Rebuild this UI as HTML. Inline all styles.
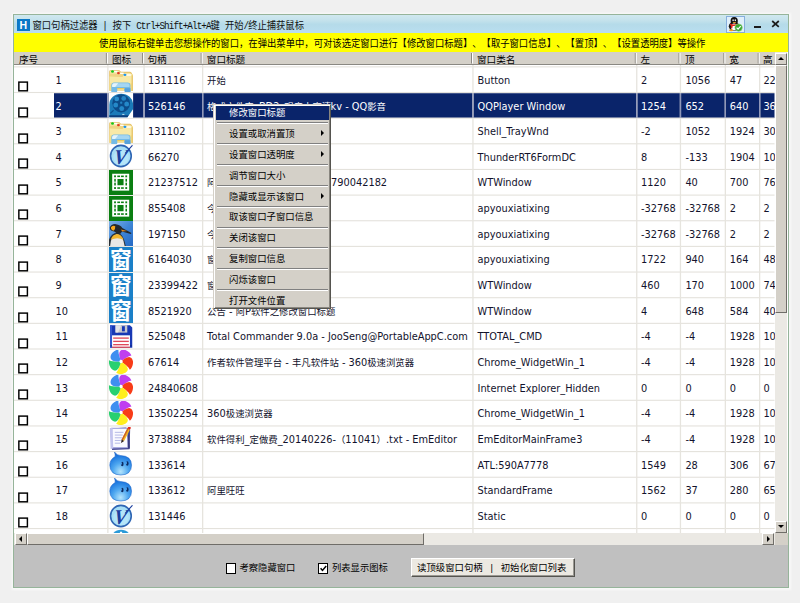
<!DOCTYPE html>
<html lang="zh-CN"><head><meta charset="utf-8"><title>窗口句柄过滤器</title>
<style>
html,body{margin:0;padding:0}
body{width:800px;height:603px;overflow:hidden;background:#f0f0f0;position:relative;
 font-family:"DejaVu Sans","Liberation Sans","Noto Sans CJK SC",sans-serif;font-size:9.8px;color:#000;text-spacing-trim:space-all}
.a{position:absolute;white-space:nowrap}
.cj{font-family:"Liberation Sans","Noto Sans CJK SC",sans-serif;font-size:9.4px}
.t{position:absolute;white-space:nowrap;height:14px;line-height:14px;font-size:9.8px;color:#12122c}
.t.s{color:#fff}
.c{font-size:9.4px}
.hd{position:absolute;white-space:nowrap;top:52.7px;height:13px;line-height:14px;font-size:9.6px;font-family:"Liberation Sans","Noto Sans CJK SC",sans-serif}
.cb{position:absolute;box-sizing:border-box;border:1.5px solid #000;background:#fff}
.mi{position:absolute;left:15px;white-space:nowrap;height:14px;line-height:14px;font-size:9.4px;font-family:"Liberation Sans","Noto Sans CJK SC",sans-serif;color:#000}
.sep{position:absolute;left:3px;right:2px;height:1px;background:#808080;border-bottom:1px solid #fff}
.arr{position:absolute;width:0;height:0;border-left:3px solid #000;border-top:3px solid transparent;border-bottom:3px solid transparent}
</style></head><body>

<div class="a" style="left:13px;top:14px;width:776px;height:574px;box-shadow:0 0 2px 1.5px rgba(255,255,255,.6);background:transparent"></div>
<div class="a" style="left:13px;top:14px;width:776px;height:574px;background:#96b49a"></div>
<div class="a" style="left:14px;top:15px;width:774px;height:572px;background:#fff"></div>
<div class="a" style="left:14px;top:15px;width:774px;height:18px;background:linear-gradient(#d0e8ef 0%,#c4e2ec 30%,#b5dbe9 52%,#b9def0 100%)"></div>
<div class="a" style="left:17px;top:18.5px;width:12.6px;height:12.4px;background:#0b78c6"></div>
<div class="a" style="left:17px;top:18.5px;width:12.6px;height:12.4px;line-height:12.6px;text-align:center;color:#fff;font-family:'Liberation Sans',sans-serif;font-weight:bold;font-size:10.5px">H</div>
<div class="a" style="left:32.5px;top:20.4px;height:14px;line-height:14px;font-size:9.3px;transform:scaleY(1.13);transform-origin:50% 50%;font-family:'Liberation Mono','Noto Sans CJK SC',monospace;color:#111">窗口句柄过滤器<span style="display:inline-block;width:15px;text-align:center">|</span>按下<span style="letter-spacing:-0.93px;margin-left:5px">Ctrl+Shift+Alt+A</span>键<span style="display:inline-block;width:5px"></span>开始<span style="letter-spacing:-0.93px">/</span>终止捕获鼠标</div>
<div class="a" style="left:726.4px;top:15.6px;width:18.2px;height:17px;box-sizing:border-box;background:#dfeffa;border:1px solid #86aedc"></div>
<svg class="a" style="left:727px;top:16px" width="17" height="16" viewBox="0 0 17 16">
<ellipse cx="7" cy="10.3" rx="5.2" ry="4.6" fill="#1a1a1a"/>
<ellipse cx="7.2" cy="5" rx="3.6" ry="3.9" fill="#111"/>
<ellipse cx="7" cy="11" rx="3" ry="3.6" fill="#fff"/>
<path d="M3.2 7.6 Q7 9.6 10.8 7.4 L11 9 Q7 11 3 9.2 Z" fill="#e0281c"/>
<path d="M4.2 9 L5.8 9.6 L5.2 12.6 L3.8 12 Z" fill="#e0281c"/>
<ellipse cx="4.2" cy="14.3" rx="2.2" ry="1" fill="#f0a020"/>
<ellipse cx="7.4" cy="6.6" rx="1.7" ry=".7" fill="#f0a020"/>
<ellipse cx="6.1" cy="4.3" rx=".7" ry="1" fill="#fff"/><ellipse cx="8.3" cy="4.3" rx=".7" ry="1" fill="#fff"/>
<circle cx="11.6" cy="11.6" r="3.7" fill="#3aa832"/><circle cx="11.6" cy="11.6" r="3.7" fill="none" stroke="#8ad080" stroke-width=".6"/>
<path d="M9.6 11.6 L11.1 13.1 L13.7 10.1" fill="none" stroke="#fff" stroke-width="1.2"/>
</svg>
<div class="a" style="left:753.7px;top:26px;width:7.4px;height:1.8px;background:#1c1c1c"></div>
<svg class="a" style="left:771px;top:20px" width="9" height="8" viewBox="0 0 9 8"><path d="M1.2 1 L7.8 6.9 M7.8 1 L1.2 6.9" stroke="#1c1c1c" stroke-width="1.7" fill="none"/></svg>
<div class="a" style="left:14px;top:33px;width:774px;height:19px;background:#ffff00"></div>
<div class="a" style="left:99.1px;top:37.4px;height:14px;line-height:14px;font-size:9.335px;transform:scaleY(1.07);transform-origin:50% 50%;font-family:'Liberation Sans','Noto Sans CJK SC',sans-serif;color:#000">使用鼠标右键单击您想操作的窗口，在弹出菜单中，可对该选定窗口进行【修改窗口标题】、【取子窗口信息】、【置顶】、【设置透明度】等操作</div>
<div class="a" style="left:14px;top:52px;width:760.5px;height:12.2px;background:#d4d0c8;border-bottom:1px solid #8a8882"></div>
<div class="hd" style="left:19px">序号</div>
<div class="hd" style="left:112px">图标</div>
<div class="hd" style="left:147.5px">句柄</div>
<div class="hd" style="left:206.8px">窗口标题</div>
<div class="hd" style="left:477px">窗口类名</div>
<div class="hd" style="left:640.6px">左</div>
<div class="hd" style="left:685px">顶</div>
<div class="hd" style="left:729.2px">宽</div>
<div class="hd" style="left:763px">高</div>
<svg class="a" style="left:0;top:0" width="800" height="603" viewBox="0 0 800 603"><rect x="105.9" y="53" width="1" height="10.5" fill="#8a8780"/><rect x="106.9" y="53" width="1" height="10.5" fill="#fff"/><rect x="142.1" y="53" width="1" height="10.5" fill="#8a8780"/><rect x="143.1" y="53" width="1" height="10.5" fill="#fff"/><rect x="200.7" y="53" width="1" height="10.5" fill="#8a8780"/><rect x="201.7" y="53" width="1" height="10.5" fill="#fff"/><rect x="471" y="53" width="1" height="10.5" fill="#8a8780"/><rect x="472" y="53" width="1" height="10.5" fill="#fff"/><rect x="634.8" y="53" width="1" height="10.5" fill="#8a8780"/><rect x="635.8" y="53" width="1" height="10.5" fill="#fff"/><rect x="678.5" y="53" width="1" height="10.5" fill="#8a8780"/><rect x="679.5" y="53" width="1" height="10.5" fill="#fff"/><rect x="723.4" y="53" width="1" height="10.5" fill="#8a8780"/><rect x="724.4" y="53" width="1" height="10.5" fill="#fff"/><rect x="757.7" y="53" width="1" height="10.5" fill="#8a8780"/><rect x="758.7" y="53" width="1" height="10.5" fill="#fff"/><rect x="54" y="93.2" width="720.5" height="24.65" fill="#0a246a"/><rect x="108.7" y="93.2" width="24.4" height="24.65" fill="#fff"/><rect x="14" y="66.3" width="760.5" height="1.1" fill="#e4e2dc"/><rect x="14" y="91.95" width="760.5" height="1.1" fill="#e4e2dc"/><rect x="14" y="117.6" width="760.5" height="1.1" fill="#e4e2dc"/><rect x="14" y="143.25" width="760.5" height="1.1" fill="#e4e2dc"/><rect x="14" y="168.9" width="760.5" height="1.1" fill="#e4e2dc"/><rect x="14" y="194.55" width="760.5" height="1.1" fill="#e4e2dc"/><rect x="14" y="220.2" width="760.5" height="1.1" fill="#e4e2dc"/><rect x="14" y="245.85" width="760.5" height="1.1" fill="#e4e2dc"/><rect x="14" y="271.5" width="760.5" height="1.1" fill="#e4e2dc"/><rect x="14" y="297.15" width="760.5" height="1.1" fill="#e4e2dc"/><rect x="14" y="322.8" width="760.5" height="1.1" fill="#e4e2dc"/><rect x="14" y="348.45" width="760.5" height="1.1" fill="#e4e2dc"/><rect x="14" y="374.1" width="760.5" height="1.1" fill="#e4e2dc"/><rect x="14" y="399.75" width="760.5" height="1.1" fill="#e4e2dc"/><rect x="14" y="425.4" width="760.5" height="1.1" fill="#e4e2dc"/><rect x="14" y="451.05" width="760.5" height="1.1" fill="#e4e2dc"/><rect x="14" y="476.7" width="760.5" height="1.1" fill="#e4e2dc"/><rect x="14" y="502.35" width="760.5" height="1.1" fill="#e4e2dc"/><rect x="14" y="528" width="760.5" height="1.1" fill="#e4e2dc"/><rect x="107.2" y="65" width="1.3" height="468" fill="#e6e4de"/><rect x="107.2" y="93.2" width="1.3" height="24.65" fill="#9097b8"/><rect x="143.4" y="65" width="1.3" height="468" fill="#e6e4de"/><rect x="143.4" y="93.2" width="1.3" height="24.65" fill="#9097b8"/><rect x="202" y="65" width="1.3" height="468" fill="#e6e4de"/><rect x="202" y="93.2" width="1.3" height="24.65" fill="#9097b8"/><rect x="472.3" y="65" width="1.3" height="468" fill="#e6e4de"/><rect x="472.3" y="93.2" width="1.3" height="24.65" fill="#9097b8"/><rect x="636.1" y="65" width="1.3" height="468" fill="#e6e4de"/><rect x="636.1" y="93.2" width="1.3" height="24.65" fill="#9097b8"/><rect x="679.8" y="65" width="1.3" height="468" fill="#e6e4de"/><rect x="679.8" y="93.2" width="1.3" height="24.65" fill="#9097b8"/><rect x="724.7" y="65" width="1.3" height="468" fill="#e6e4de"/><rect x="724.7" y="93.2" width="1.3" height="24.65" fill="#9097b8"/><rect x="759" y="65" width="1.3" height="468" fill="#e6e4de"/><rect x="759" y="93.2" width="1.3" height="24.65" fill="#9097b8"/></svg>
<svg class="a" style="left:17px;top:80.2px" width="13" height="13" viewBox="0 0 13 13"><rect x="1.85" y="2.1" width="8.55" height="8.7" fill="#fff" stroke="#000" stroke-width="1.45"/></svg>
<div class="t" style="left:55.5px;top:73.875px">1</div>
<div class="t" style="left:148px;top:73.875px">131116</div>
<div class="t" style="left:207.1px;top:73.875px"><span class="c">开始</span></div>
<div class="t" style="left:477.5px;top:73.875px">Button</div>
<div class="t" style="left:641px;top:73.875px">2</div>
<div class="t" style="left:685.4px;top:73.875px">1056</div>
<div class="t" style="left:729.8px;top:73.875px">47</div>
<div class="t" style="left:763.4px;top:73.875px">22</div>
<svg class="a" style="left:17px;top:105.85px" width="13" height="13" viewBox="0 0 13 13"><rect x="1.85" y="2.1" width="8.55" height="8.7" fill="#fff" stroke="#000" stroke-width="1.45"/></svg>
<div class="t s" style="left:55.5px;top:99.525px">2</div>
<div class="t s" style="left:148px;top:99.525px">526146</div>
<div class="t s" style="left:207.1px;top:99.525px"><span class="c">格式文件夹</span>_BD2_<span class="c">观音山高清</span></div>
<div class="t s" style="left:477.5px;top:99.525px">QQPlayer Window</div>
<div class="t s" style="left:641px;top:99.525px">1254</div>
<div class="t s" style="left:685.4px;top:99.525px">652</div>
<div class="t s" style="left:729.8px;top:99.525px">640</div>
<div class="t s" style="left:763.4px;top:99.525px">36</div>
<svg class="a" style="left:17px;top:131.5px" width="13" height="13" viewBox="0 0 13 13"><rect x="1.85" y="2.1" width="8.55" height="8.7" fill="#fff" stroke="#000" stroke-width="1.45"/></svg>
<div class="t" style="left:55.5px;top:125.175px">3</div>
<div class="t" style="left:148px;top:125.175px">131102</div>
<div class="t" style="left:477.5px;top:125.175px">Shell_TrayWnd</div>
<div class="t" style="left:641px;top:125.175px">-2</div>
<div class="t" style="left:685.4px;top:125.175px">1052</div>
<div class="t" style="left:729.8px;top:125.175px">1924</div>
<div class="t" style="left:763.4px;top:125.175px">30</div>
<svg class="a" style="left:17px;top:157.15px" width="13" height="13" viewBox="0 0 13 13"><rect x="1.85" y="2.1" width="8.55" height="8.7" fill="#fff" stroke="#000" stroke-width="1.45"/></svg>
<div class="t" style="left:55.5px;top:150.825px">4</div>
<div class="t" style="left:148px;top:150.825px">66270</div>
<div class="t" style="left:477.5px;top:150.825px">ThunderRT6FormDC</div>
<div class="t" style="left:641px;top:150.825px">8</div>
<div class="t" style="left:685.4px;top:150.825px">-133</div>
<div class="t" style="left:729.8px;top:150.825px">1904</div>
<div class="t" style="left:763.4px;top:150.825px">10</div>
<svg class="a" style="left:17px;top:182.8px" width="13" height="13" viewBox="0 0 13 13"><rect x="1.85" y="2.1" width="8.55" height="8.7" fill="#fff" stroke="#000" stroke-width="1.45"/></svg>
<div class="t" style="left:55.5px;top:176.475px">5</div>
<div class="t" style="left:148px;top:176.475px">21237512</div>
<div class="t" style="left:207.1px;top:176.475px"><span class="c">阿</span>P<span class="c">软件之窗口句柄过滤器</span></div>
<div class="t" style="left:477.5px;top:176.475px">WTWindow</div>
<div class="t" style="left:641px;top:176.475px">1120</div>
<div class="t" style="left:685.4px;top:176.475px">40</div>
<div class="t" style="left:729.8px;top:176.475px">700</div>
<div class="t" style="left:763.4px;top:176.475px">76</div>
<svg class="a" style="left:17px;top:208.45px" width="13" height="13" viewBox="0 0 13 13"><rect x="1.85" y="2.1" width="8.55" height="8.7" fill="#fff" stroke="#000" stroke-width="1.45"/></svg>
<div class="t" style="left:55.5px;top:202.125px">6</div>
<div class="t" style="left:148px;top:202.125px">855408</div>
<div class="t" style="left:207.1px;top:202.125px"><span class="c">今日要闻</span></div>
<div class="t" style="left:477.5px;top:202.125px">apyouxiatixing</div>
<div class="t" style="left:641px;top:202.125px">-32768</div>
<div class="t" style="left:685.4px;top:202.125px">-32768</div>
<div class="t" style="left:729.8px;top:202.125px">2</div>
<div class="t" style="left:763.4px;top:202.125px">2</div>
<svg class="a" style="left:17px;top:234.1px" width="13" height="13" viewBox="0 0 13 13"><rect x="1.85" y="2.1" width="8.55" height="8.7" fill="#fff" stroke="#000" stroke-width="1.45"/></svg>
<div class="t" style="left:55.5px;top:227.775px">7</div>
<div class="t" style="left:148px;top:227.775px">197150</div>
<div class="t" style="left:207.1px;top:227.775px"><span class="c">今日要闻</span></div>
<div class="t" style="left:477.5px;top:227.775px">apyouxiatixing</div>
<div class="t" style="left:641px;top:227.775px">-32768</div>
<div class="t" style="left:685.4px;top:227.775px">-32768</div>
<div class="t" style="left:729.8px;top:227.775px">2</div>
<div class="t" style="left:763.4px;top:227.775px">2</div>
<svg class="a" style="left:17px;top:259.75px" width="13" height="13" viewBox="0 0 13 13"><rect x="1.85" y="2.1" width="8.55" height="8.7" fill="#fff" stroke="#000" stroke-width="1.45"/></svg>
<div class="t" style="left:55.5px;top:253.425px">8</div>
<div class="t" style="left:148px;top:253.425px">6164030</div>
<div class="t" style="left:207.1px;top:253.425px"><span class="c">窗口句柄过滤器</span></div>
<div class="t" style="left:477.5px;top:253.425px">apyouxiatixing</div>
<div class="t" style="left:641px;top:253.425px">1722</div>
<div class="t" style="left:685.4px;top:253.425px">940</div>
<div class="t" style="left:729.8px;top:253.425px">164</div>
<div class="t" style="left:763.4px;top:253.425px">48</div>
<svg class="a" style="left:17px;top:285.4px" width="13" height="13" viewBox="0 0 13 13"><rect x="1.85" y="2.1" width="8.55" height="8.7" fill="#fff" stroke="#000" stroke-width="1.45"/></svg>
<div class="t" style="left:55.5px;top:279.075px">9</div>
<div class="t" style="left:148px;top:279.075px">23399422</div>
<div class="t" style="left:207.1px;top:279.075px"><span class="c">窗口句柄过滤器</span></div>
<div class="t" style="left:477.5px;top:279.075px">WTWindow</div>
<div class="t" style="left:641px;top:279.075px">460</div>
<div class="t" style="left:685.4px;top:279.075px">170</div>
<div class="t" style="left:729.8px;top:279.075px">1000</div>
<div class="t" style="left:763.4px;top:279.075px">74</div>
<svg class="a" style="left:17px;top:311.05px" width="13" height="13" viewBox="0 0 13 13"><rect x="1.85" y="2.1" width="8.55" height="8.7" fill="#fff" stroke="#000" stroke-width="1.45"/></svg>
<div class="t" style="left:55.5px;top:304.725px">10</div>
<div class="t" style="left:148px;top:304.725px">8521920</div>
<div class="t" style="left:207.1px;top:304.725px"><span class="c">公告</span> - <span class="c">阿</span>P<span class="c">软件之修改窗口标题</span></div>
<div class="t" style="left:477.5px;top:304.725px">WTWindow</div>
<div class="t" style="left:641px;top:304.725px">4</div>
<div class="t" style="left:685.4px;top:304.725px">648</div>
<div class="t" style="left:729.8px;top:304.725px">584</div>
<div class="t" style="left:763.4px;top:304.725px">40</div>
<svg class="a" style="left:17px;top:336.7px" width="13" height="13" viewBox="0 0 13 13"><rect x="1.85" y="2.1" width="8.55" height="8.7" fill="#fff" stroke="#000" stroke-width="1.45"/></svg>
<div class="t" style="left:55.5px;top:330.375px">11</div>
<div class="t" style="left:148px;top:330.375px">525048</div>
<div class="t" style="left:207.1px;top:330.375px">Total Commander 9.0a - JooSeng@PortableAppC.com</div>
<div class="t" style="left:477.5px;top:330.375px">TTOTAL_CMD</div>
<div class="t" style="left:641px;top:330.375px">-4</div>
<div class="t" style="left:685.4px;top:330.375px">-4</div>
<div class="t" style="left:729.8px;top:330.375px">1928</div>
<div class="t" style="left:763.4px;top:330.375px">10</div>
<svg class="a" style="left:17px;top:362.35px" width="13" height="13" viewBox="0 0 13 13"><rect x="1.85" y="2.1" width="8.55" height="8.7" fill="#fff" stroke="#000" stroke-width="1.45"/></svg>
<div class="t" style="left:55.5px;top:356.025px">12</div>
<div class="t" style="left:148px;top:356.025px">67614</div>
<div class="t" style="left:207.1px;top:356.025px"><span class="c">作者软件管理平台</span> - <span class="c">丰凡软件站</span> - 360<span class="c">极速浏览器</span></div>
<div class="t" style="left:477.5px;top:356.025px">Chrome_WidgetWin_1</div>
<div class="t" style="left:641px;top:356.025px">-4</div>
<div class="t" style="left:685.4px;top:356.025px">-4</div>
<div class="t" style="left:729.8px;top:356.025px">1928</div>
<div class="t" style="left:763.4px;top:356.025px">10</div>
<svg class="a" style="left:17px;top:388px" width="13" height="13" viewBox="0 0 13 13"><rect x="1.85" y="2.1" width="8.55" height="8.7" fill="#fff" stroke="#000" stroke-width="1.45"/></svg>
<div class="t" style="left:55.5px;top:381.675px">13</div>
<div class="t" style="left:148px;top:381.675px">24840608</div>
<div class="t" style="left:477.5px;top:381.675px">Internet Explorer_Hidden</div>
<div class="t" style="left:641px;top:381.675px">0</div>
<div class="t" style="left:685.4px;top:381.675px">0</div>
<div class="t" style="left:729.8px;top:381.675px">0</div>
<div class="t" style="left:763.4px;top:381.675px">0</div>
<svg class="a" style="left:17px;top:413.65px" width="13" height="13" viewBox="0 0 13 13"><rect x="1.85" y="2.1" width="8.55" height="8.7" fill="#fff" stroke="#000" stroke-width="1.45"/></svg>
<div class="t" style="left:55.5px;top:407.325px">14</div>
<div class="t" style="left:148px;top:407.325px">13502254</div>
<div class="t" style="left:207.1px;top:407.325px">360<span class="c">极速浏览器</span></div>
<div class="t" style="left:477.5px;top:407.325px">Chrome_WidgetWin_1</div>
<div class="t" style="left:641px;top:407.325px">-4</div>
<div class="t" style="left:685.4px;top:407.325px">-4</div>
<div class="t" style="left:729.8px;top:407.325px">1928</div>
<div class="t" style="left:763.4px;top:407.325px">10</div>
<svg class="a" style="left:17px;top:439.3px" width="13" height="13" viewBox="0 0 13 13"><rect x="1.85" y="2.1" width="8.55" height="8.7" fill="#fff" stroke="#000" stroke-width="1.45"/></svg>
<div class="t" style="left:55.5px;top:432.975px">15</div>
<div class="t" style="left:148px;top:432.975px">3738884</div>
<div class="t" style="left:207.1px;top:432.975px"><span class="c">软件得利</span>_<span class="c">定做费</span>_20140226-<span class="c">（</span>11041<span class="c">）</span>.txt - EmEditor</div>
<div class="t" style="left:477.5px;top:432.975px">EmEditorMainFrame3</div>
<div class="t" style="left:641px;top:432.975px">-4</div>
<div class="t" style="left:685.4px;top:432.975px">-4</div>
<div class="t" style="left:729.8px;top:432.975px">1928</div>
<div class="t" style="left:763.4px;top:432.975px">10</div>
<svg class="a" style="left:17px;top:464.95px" width="13" height="13" viewBox="0 0 13 13"><rect x="1.85" y="2.1" width="8.55" height="8.7" fill="#fff" stroke="#000" stroke-width="1.45"/></svg>
<div class="t" style="left:55.5px;top:458.625px">16</div>
<div class="t" style="left:148px;top:458.625px">133614</div>
<div class="t" style="left:477.5px;top:458.625px">ATL:590A7778</div>
<div class="t" style="left:641px;top:458.625px">1549</div>
<div class="t" style="left:685.4px;top:458.625px">28</div>
<div class="t" style="left:729.8px;top:458.625px">306</div>
<div class="t" style="left:763.4px;top:458.625px">67</div>
<svg class="a" style="left:17px;top:490.6px" width="13" height="13" viewBox="0 0 13 13"><rect x="1.85" y="2.1" width="8.55" height="8.7" fill="#fff" stroke="#000" stroke-width="1.45"/></svg>
<div class="t" style="left:55.5px;top:484.275px">17</div>
<div class="t" style="left:148px;top:484.275px">133612</div>
<div class="t" style="left:207.1px;top:484.275px"><span class="c">阿里旺旺</span></div>
<div class="t" style="left:477.5px;top:484.275px">StandardFrame</div>
<div class="t" style="left:641px;top:484.275px">1562</div>
<div class="t" style="left:685.4px;top:484.275px">37</div>
<div class="t" style="left:729.8px;top:484.275px">280</div>
<div class="t" style="left:763.4px;top:484.275px">65</div>
<svg class="a" style="left:17px;top:516.25px" width="13" height="13" viewBox="0 0 13 13"><rect x="1.85" y="2.1" width="8.55" height="8.7" fill="#fff" stroke="#000" stroke-width="1.45"/></svg>
<div class="t" style="left:55.5px;top:509.925px">18</div>
<div class="t" style="left:148px;top:509.925px">131446</div>
<div class="t" style="left:477.5px;top:509.925px">Static</div>
<div class="t" style="left:641px;top:509.925px">0</div>
<div class="t" style="left:685.4px;top:509.925px">0</div>
<div class="t" style="left:729.8px;top:509.925px">0</div>
<div class="t" style="left:763.4px;top:509.925px">0</div>
<div class="t s" style="left:317.9px;top:99.525px">.mkv - QQ<span class="c">影音</span></div>
<div class="t" style="left:331px;top:176.475px">790042182</div>
<svg class="a" style="left:108.7px;top:67.45px" width="24.4" height="25" viewBox="0 0 32 32" preserveAspectRatio="none">
<g transform="translate(0,0.9)"><path d="M0.3 29.6 L0.3 5 Q0.3 3.3 2 3.3 L13.6 3.3 L15.6 5.2 L27.6 5.2 Q29.7 5.2 29.7 7.2 L31.7 9.6 L31.7 29.6 Z" fill="#e4bc5c"/>
<path d="M1.2 4.3 L13.2 4.3 L15.2 6.3 L28.6 6.3 L28.6 9 L1.2 9 Z" fill="#f6e3a0"/>
<path d="M1.2 7.6 L20.6 7.6 L22.4 10 L1.2 12 Z" fill="#efd485"/>
<path d="M0.8 11.2 L18 11.2 L19.4 8.2 L30.9 8.2 L30.9 29 L0.8 29 Z" fill="#f8e9a6"/>
<path d="M0.8 20 L30.9 20 L30.9 29 L0.8 29 Z" fill="#f5de8a"/>
<rect x="29.6" y="10" width="1.6" height="19.4" fill="#e7c56a"/>
<rect x="6.9" y="4.1" width="4.2" height="1.7" fill="#fff"/>
<rect x="14.7" y="6.3" width="4.4" height="1.7" fill="#fff"/>
<rect x="22.9" y="8.5" width="5.8" height="1.7" fill="#fff"/>
<ellipse cx="4.6" cy="4.9" rx="1.9" ry="1.5" fill="#12c81a"/>
<ellipse cx="12.4" cy="6.9" rx="1.9" ry="1.5" fill="#e23a22"/>
<ellipse cx="20.9" cy="9.1" rx="1.9" ry="1.5" fill="#1a94f2"/>
<path d="M3 32 L3 22 Q3 18.8 6.2 18.8 L24.9 18.8 Q28.1 18.8 28.1 22 L28.1 32 L20.3 32 L20.3 26.2 L10.9 26.2 L10.9 32 Z" fill="#74bbe6"/>
<path d="M4.2 22.4 Q4.2 20 6.6 20 L24.5 20 Q26.9 20 26.9 22.4 L26.9 24.6 L4.2 24.6 Z" fill="#a4d6f2"/>
<path d="M4.2 22.4 Q4.2 20 6.6 20 L12 20 L8 24.6 L4.2 24.6 Z" fill="#e4f4fc"/>
<path d="M20.3 26.2 L28.1 26.2 L28.1 32 L20.3 32 Z" fill="#58a2da"/>
<rect x="10.9" y="29.6" width="9.4" height="2.4" fill="#fff"/>
<rect x="10.9" y="26.2" width="9.4" height="1" fill="#f2c84e"/></g>
</svg>
<svg class="a" style="left:108.7px;top:93.1px" width="24.4" height="25" viewBox="0 0 32 32" preserveAspectRatio="none">
<rect x="0" y="0" width="32" height="32" fill="#fff"/>
<path d="M0.4 15 A15.6 14.2 0 0 1 31.6 15 L31.6 20.5 L24.2 31 L0.4 31 Z" fill="#1b7bb9"/>
<path d="M0.4 28.6 L25.8 28.6 L24.2 31 L0.4 31 Z" fill="#0d3f7e"/>
<path d="M1.2 25.5 L5.5 21.5 L6.6 22.6 L2.2 26.6 Z" fill="#0d4f8c"/>
<circle cx="16" cy="13.2" r="11.6" fill="#0c4c8a"/>
<circle cx="10.1" cy="7.6" r="3.1" fill="#2b8fce"/>
<circle cx="19.3" cy="6.9" r="3.1" fill="#2384c4"/>
<circle cx="8.8" cy="15.2" r="3.2" fill="#2489c9"/>
<circle cx="23.2" cy="14" r="3.2" fill="#2489c9"/>
<circle cx="16.7" cy="19.7" r="3.2" fill="#2489c9"/>
<circle cx="16" cy="12.4" r="1.5" fill="#2384c4"/>
<rect x="17.4" y="26.8" width="2.8" height="1.1" fill="#d8ecf8"/>
</svg>
<svg class="a" style="left:108.7px;top:118.75px" width="24.4" height="25" viewBox="0 0 32 32" preserveAspectRatio="none">
<g transform="translate(0,0.9)"><path d="M0.3 29.6 L0.3 5 Q0.3 3.3 2 3.3 L13.6 3.3 L15.6 5.2 L27.6 5.2 Q29.7 5.2 29.7 7.2 L31.7 9.6 L31.7 29.6 Z" fill="#e4bc5c"/>
<path d="M1.2 4.3 L13.2 4.3 L15.2 6.3 L28.6 6.3 L28.6 9 L1.2 9 Z" fill="#f6e3a0"/>
<path d="M1.2 7.6 L20.6 7.6 L22.4 10 L1.2 12 Z" fill="#efd485"/>
<path d="M0.8 11.2 L18 11.2 L19.4 8.2 L30.9 8.2 L30.9 29 L0.8 29 Z" fill="#f8e9a6"/>
<path d="M0.8 20 L30.9 20 L30.9 29 L0.8 29 Z" fill="#f5de8a"/>
<rect x="29.6" y="10" width="1.6" height="19.4" fill="#e7c56a"/>
<rect x="6.9" y="4.1" width="4.2" height="1.7" fill="#fff"/>
<rect x="14.7" y="6.3" width="4.4" height="1.7" fill="#fff"/>
<rect x="22.9" y="8.5" width="5.8" height="1.7" fill="#fff"/>
<ellipse cx="4.6" cy="4.9" rx="1.9" ry="1.5" fill="#12c81a"/>
<ellipse cx="12.4" cy="6.9" rx="1.9" ry="1.5" fill="#e23a22"/>
<ellipse cx="20.9" cy="9.1" rx="1.9" ry="1.5" fill="#1a94f2"/>
<path d="M3 32 L3 22 Q3 18.8 6.2 18.8 L24.9 18.8 Q28.1 18.8 28.1 22 L28.1 32 L20.3 32 L20.3 26.2 L10.9 26.2 L10.9 32 Z" fill="#74bbe6"/>
<path d="M4.2 22.4 Q4.2 20 6.6 20 L24.5 20 Q26.9 20 26.9 22.4 L26.9 24.6 L4.2 24.6 Z" fill="#a4d6f2"/>
<path d="M4.2 22.4 Q4.2 20 6.6 20 L12 20 L8 24.6 L4.2 24.6 Z" fill="#e4f4fc"/>
<path d="M20.3 26.2 L28.1 26.2 L28.1 32 L20.3 32 Z" fill="#58a2da"/>
<rect x="10.9" y="29.6" width="9.4" height="2.4" fill="#fff"/>
<rect x="10.9" y="26.2" width="9.4" height="1" fill="#f2c84e"/></g>
</svg>
<svg class="a" style="left:108.7px;top:144.4px" width="24.4" height="25" viewBox="0 0 32 32" preserveAspectRatio="none">
<g transform="translate(0,-0.8)"><circle cx="15.6" cy="16.2" r="13.6" fill="#a6def6" stroke="#2f66b4" stroke-width="2.1"/>
<circle cx="15.8" cy="18" r="10" fill="#bfeafc" opacity=".6"/>
<text x="14.6" y="26.2" text-anchor="middle" font-family="'Liberation Serif','DejaVu Serif',serif" font-style="italic" font-weight="bold" font-size="27" fill="#1c3f9e" transform="skewX(-8) translate(3.4,0)">V</text><path d="M21.5 12.5 L30.4 2.8" stroke="#1c3f9e" stroke-width="1.5" stroke-linecap="round" fill="none"/></g>
</svg>
<svg class="a" style="left:108.7px;top:170.05px" width="24.4" height="25" viewBox="0 0 32 32" preserveAspectRatio="none">
<rect x="0" y="0" width="32" height="32" fill="#0a7f12"/>
<rect x="4.2" y="4.8" width="22.3" height="21.6" fill="#fff"/>
<g fill="#0a7f12" transform="translate(-0.6,-0.7)"><rect x="11.7" y="12.2" width="8" height="8"/>
<rect x="7.3" y="7.6" width="2.4" height="2.4"/><rect x="22" y="7.6" width="2.4" height="2.4"/>
<rect x="7.3" y="22.6" width="2.4" height="2.4"/><rect x="22" y="22.6" width="2.4" height="2.4"/>
<rect x="11.5" y="7.8" width="3.6" height="2"/><rect x="16.4" y="7.8" width="3.6" height="2"/>
<rect x="11.5" y="22.8" width="3.6" height="2"/><rect x="16.4" y="22.8" width="3.6" height="2"/>
<rect x="7.5" y="12" width="2" height="3.6"/><rect x="7.5" y="16.9" width="2" height="3.6"/>
<rect x="22.2" y="12" width="2" height="3.6"/><rect x="22.2" y="16.9" width="2" height="3.6"/>
</g>
</svg>
<svg class="a" style="left:108.7px;top:195.7px" width="24.4" height="25" viewBox="0 0 32 32" preserveAspectRatio="none">
<rect x="0" y="0" width="32" height="32" fill="#0a7f12"/>
<rect x="4.2" y="4.8" width="22.3" height="21.6" fill="#fff"/>
<g fill="#0a7f12" transform="translate(-0.6,-0.7)"><rect x="11.7" y="12.2" width="8" height="8"/>
<rect x="7.3" y="7.6" width="2.4" height="2.4"/><rect x="22" y="7.6" width="2.4" height="2.4"/>
<rect x="7.3" y="22.6" width="2.4" height="2.4"/><rect x="22" y="22.6" width="2.4" height="2.4"/>
<rect x="11.5" y="7.8" width="3.6" height="2"/><rect x="16.4" y="7.8" width="3.6" height="2"/>
<rect x="11.5" y="22.8" width="3.6" height="2"/><rect x="16.4" y="22.8" width="3.6" height="2"/>
<rect x="7.5" y="12" width="2" height="3.6"/><rect x="7.5" y="16.9" width="2" height="3.6"/>
<rect x="22.2" y="12" width="2" height="3.6"/><rect x="22.2" y="16.9" width="2" height="3.6"/>
</g>
</svg>
<svg class="a" style="left:108.7px;top:221.35px" width="24.4" height="25" viewBox="0 0 32 32" preserveAspectRatio="none">
<defs><linearGradient id="pg7" x1="0" y1="0" x2="1" y2="1"><stop offset="0" stop-color="#7fb0e6"/><stop offset=".5" stop-color="#3f86d6"/><stop offset="1" stop-color="#2468c4"/></linearGradient></defs>
<rect x="0" y="0" width="32" height="32" fill="url(#pg7)"/>
<path d="M0 32 L0 24 Q3 15.5 11 15 Q19 15.5 22 32 Z" fill="#2a3138"/>
<path d="M1.5 32 Q2 19 10.5 17 Q18.5 18 20.5 32 Z" fill="#e9e7e6"/>
<path d="M2.5 24 Q4 17.5 10.5 16.6 Q16.5 17.2 19 24 Q11 20 2.5 24 Z" fill="#f2b62e"/>
<path d="M1 8.5 Q3 3.5 9 4 Q15 4.5 17.5 9 L29.5 15.5 L28.5 16.5 L17 13.5 Q15.5 17.5 11 16.5 Q8 13 3.5 12.5 Q1 11.5 1 8.5 Z" fill="#23282c"/>
<path d="M2.5 8 Q5.5 5.2 8.2 6.6 Q8.6 10.5 6 12.4 Q2.4 11.4 2.5 8 Z" fill="#f5a81c"/>
<path d="M15.5 11 L24 12.8 L17.5 13.3 Z" fill="#e88a1a"/>
</svg>
<svg class="a" style="left:108.7px;top:247px" width="24.4" height="25" viewBox="0 0 32 32" preserveAspectRatio="none">
<rect x="0" y="0" width="32" height="32" fill="#1a80c8"/>
<text x="15.6" y="27.2" text-anchor="middle" font-family="'Noto Sans CJK SC','WenQuanYi Zen Hei',sans-serif" font-weight="700" font-size="28.5" fill="#fff">窗</text>
</svg>
<svg class="a" style="left:108.7px;top:272.65px" width="24.4" height="25" viewBox="0 0 32 32" preserveAspectRatio="none">
<rect x="0" y="0" width="32" height="32" fill="#1a80c8"/>
<text x="15.6" y="27.2" text-anchor="middle" font-family="'Noto Sans CJK SC','WenQuanYi Zen Hei',sans-serif" font-weight="700" font-size="28.5" fill="#fff">窗</text>
</svg>
<svg class="a" style="left:108.7px;top:298.3px" width="24.4" height="25" viewBox="0 0 32 32" preserveAspectRatio="none">
<rect x="0" y="0" width="32" height="32" fill="#1a80c8"/>
<text x="15.6" y="27.2" text-anchor="middle" font-family="'Noto Sans CJK SC','WenQuanYi Zen Hei',sans-serif" font-weight="700" font-size="28.5" fill="#fff">窗</text>
</svg>
<svg class="a" style="left:108.7px;top:323.95px" width="24.4" height="25" viewBox="0 0 32 32" preserveAspectRatio="none">
<path d="M1.5 1.5 L27.5 1.5 L30.5 4.5 L30.5 30.5 L1.5 30.5 Z" fill="#1838b4"/>
<path d="M1.5 1.5 L4 1.5 L4 30.5 L1.5 30.5 Z" fill="#3458d0"/>
<rect x="8.5" y="1.5" width="15.5" height="9.5" fill="#c8c8cc"/>
<path d="M8.5 1.5 L16 1.5 L12 11 L8.5 11 Z" fill="#e4e4e8"/>
<rect x="17" y="2.8" width="3.8" height="6.6" fill="#1838b4"/>
<rect x="4" y="14.5" width="23.5" height="16" fill="#fff"/>
<rect x="5.5" y="17.2" width="20.5" height="1.7" fill="#e04858"/>
<rect x="5.5" y="21.4" width="20.5" height="1.7" fill="#e04858"/>
<rect x="5.5" y="25.6" width="20.5" height="1.7" fill="#e04858"/>
<rect x="4" y="29" width="23.5" height="1.5" fill="#c83048"/>
<rect x="2.2" y="27.3" width="1.3" height="1.3" fill="#0c1c60"/><rect x="28.3" y="27.3" width="1.3" height="1.3" fill="#0c1c60"/>
</svg>
<svg class="a" style="left:108.7px;top:349.6px" width="24.4" height="25" viewBox="0 0 32 32" preserveAspectRatio="none"><path transform="translate(15.8 14.7) rotate(0)" d="M0 0 C-1.5 -4 -3.4 -9 -1.8 -12.5 C-0.4 -15.6 4 -15.6 7 -14.2 C10 -12.8 12.6 -10.6 13.6 -7.8 C9.5 -7.4 4.5 -3.4 0 0Z" fill="#bf3ff0"/><path transform="translate(15.8 14.7) rotate(72)" d="M0 0 C-1.5 -4 -3.4 -9 -1.8 -12.5 C-0.4 -15.6 4 -15.6 7 -14.2 C10 -12.8 12.6 -10.6 13.6 -7.8 C9.5 -7.4 4.5 -3.4 0 0Z" fill="#f83c18"/><path transform="translate(15.8 14.7) rotate(144)" d="M0 0 C-1.5 -4 -3.4 -9 -1.8 -12.5 C-0.4 -15.6 4 -15.6 7 -14.2 C10 -12.8 12.6 -10.6 13.6 -7.8 C9.5 -7.4 4.5 -3.4 0 0Z" fill="#ffee1e"/><path transform="translate(15.8 14.7) rotate(216)" d="M0 0 C-1.5 -4 -3.4 -9 -1.8 -12.5 C-0.4 -15.6 4 -15.6 7 -14.2 C10 -12.8 12.6 -10.6 13.6 -7.8 C9.5 -7.4 4.5 -3.4 0 0Z" fill="#28d070"/><path transform="translate(15.8 14.7) rotate(288)" d="M0 0 C-1.5 -4 -3.4 -9 -1.8 -12.5 C-0.4 -15.6 4 -15.6 7 -14.2 C10 -12.8 12.6 -10.6 13.6 -7.8 C9.5 -7.4 4.5 -3.4 0 0Z" fill="#3f8ff0"/><circle cx="15.8" cy="14.7" r="2.1" fill="#fff"/></svg>
<svg class="a" style="left:108.7px;top:375.25px" width="24.4" height="25" viewBox="0 0 32 32" preserveAspectRatio="none"><path transform="translate(15.8 14.7) rotate(0)" d="M0 0 C-1.5 -4 -3.4 -9 -1.8 -12.5 C-0.4 -15.6 4 -15.6 7 -14.2 C10 -12.8 12.6 -10.6 13.6 -7.8 C9.5 -7.4 4.5 -3.4 0 0Z" fill="#bf3ff0"/><path transform="translate(15.8 14.7) rotate(72)" d="M0 0 C-1.5 -4 -3.4 -9 -1.8 -12.5 C-0.4 -15.6 4 -15.6 7 -14.2 C10 -12.8 12.6 -10.6 13.6 -7.8 C9.5 -7.4 4.5 -3.4 0 0Z" fill="#f83c18"/><path transform="translate(15.8 14.7) rotate(144)" d="M0 0 C-1.5 -4 -3.4 -9 -1.8 -12.5 C-0.4 -15.6 4 -15.6 7 -14.2 C10 -12.8 12.6 -10.6 13.6 -7.8 C9.5 -7.4 4.5 -3.4 0 0Z" fill="#ffee1e"/><path transform="translate(15.8 14.7) rotate(216)" d="M0 0 C-1.5 -4 -3.4 -9 -1.8 -12.5 C-0.4 -15.6 4 -15.6 7 -14.2 C10 -12.8 12.6 -10.6 13.6 -7.8 C9.5 -7.4 4.5 -3.4 0 0Z" fill="#28d070"/><path transform="translate(15.8 14.7) rotate(288)" d="M0 0 C-1.5 -4 -3.4 -9 -1.8 -12.5 C-0.4 -15.6 4 -15.6 7 -14.2 C10 -12.8 12.6 -10.6 13.6 -7.8 C9.5 -7.4 4.5 -3.4 0 0Z" fill="#3f8ff0"/><circle cx="15.8" cy="14.7" r="2.1" fill="#fff"/></svg>
<svg class="a" style="left:108.7px;top:400.9px" width="24.4" height="25" viewBox="0 0 32 32" preserveAspectRatio="none"><path transform="translate(15.8 14.7) rotate(0)" d="M0 0 C-1.5 -4 -3.4 -9 -1.8 -12.5 C-0.4 -15.6 4 -15.6 7 -14.2 C10 -12.8 12.6 -10.6 13.6 -7.8 C9.5 -7.4 4.5 -3.4 0 0Z" fill="#bf3ff0"/><path transform="translate(15.8 14.7) rotate(72)" d="M0 0 C-1.5 -4 -3.4 -9 -1.8 -12.5 C-0.4 -15.6 4 -15.6 7 -14.2 C10 -12.8 12.6 -10.6 13.6 -7.8 C9.5 -7.4 4.5 -3.4 0 0Z" fill="#f83c18"/><path transform="translate(15.8 14.7) rotate(144)" d="M0 0 C-1.5 -4 -3.4 -9 -1.8 -12.5 C-0.4 -15.6 4 -15.6 7 -14.2 C10 -12.8 12.6 -10.6 13.6 -7.8 C9.5 -7.4 4.5 -3.4 0 0Z" fill="#ffee1e"/><path transform="translate(15.8 14.7) rotate(216)" d="M0 0 C-1.5 -4 -3.4 -9 -1.8 -12.5 C-0.4 -15.6 4 -15.6 7 -14.2 C10 -12.8 12.6 -10.6 13.6 -7.8 C9.5 -7.4 4.5 -3.4 0 0Z" fill="#28d070"/><path transform="translate(15.8 14.7) rotate(288)" d="M0 0 C-1.5 -4 -3.4 -9 -1.8 -12.5 C-0.4 -15.6 4 -15.6 7 -14.2 C10 -12.8 12.6 -10.6 13.6 -7.8 C9.5 -7.4 4.5 -3.4 0 0Z" fill="#3f8ff0"/><circle cx="15.8" cy="14.7" r="2.1" fill="#fff"/></svg>
<svg class="a" style="left:108.7px;top:426.55px" width="24.4" height="25" viewBox="0 0 32 32" preserveAspectRatio="none">
<g transform="translate(-0.6,-1.6) scale(1.03,1.05)">
<path d="M2 3.5 L22 2 L27.5 5 L26.8 28.5 L4.5 29.5 Z" fill="#4a4b96"/>
<path d="M3 2.5 L23.5 2.5 L24.8 27 L3.5 27.8 Z" fill="#a9abe0"/>
<path d="M4.8 4 L23.6 4 L24 25.8 L4.8 26 Z" fill="#fafaff"/>
<path d="M1.6 3 L5 2.5 L6 27.5 L2.6 28.2 Z" fill="#c3c4ee"/>
<g fill="#b9bde8"><rect x="8" y="7.4" width="11" height="1.3"/><rect x="8" y="10.7" width="10" height="1.3"/><rect x="8" y="14" width="9" height="1.3"/><rect x="8" y="17.3" width="7.6" height="1.3"/><rect x="8" y="20.6" width="7" height="1.3"/></g>
<path d="M24 3 L27.2 4.8 L19.8 18.6 L16.6 16.8 Z" fill="#f6b81c"/>
<path d="M24 3 L25.6 3.9 L18.2 17.7 L16.6 16.8 Z" fill="#c8602a"/>
<path d="M24 3 Q25.6 0.2 27.8 1.4 Q29 2.8 27.2 4.8 Z" fill="#e62418"/>
<path d="M16.6 16.8 L19.8 18.6 L16 21 Z" fill="#2a1e1a"/>
<path d="M26.4 9 L27.2 27.8 L24.6 27.8 L24.6 12.4 Z" fill="#3c3d80"/>
</g>
</svg>
<svg class="a" style="left:108.7px;top:452.2px" width="24.4" height="25" viewBox="0 0 32 32" preserveAspectRatio="none">
<defs><radialGradient id="dg16" cx=".5" cy=".85" r=".9"><stop offset="0" stop-color="#b4e4fc"/><stop offset=".4" stop-color="#4fa8f0"/><stop offset=".75" stop-color="#1f7ae0"/><stop offset="1" stop-color="#155cc4"/></radialGradient></defs>
<path transform="translate(-0.6,-1.2) scale(1.02,1.03)" d="M7.5 1 Q11 5.5 15.5 5.6 Q29.5 6 29.6 17.5 Q29.5 29.5 15.8 29.8 Q1.8 29.5 1.6 17.5 Q1.6 10.5 8.5 6.8 Q8.8 4 7.5 1 Z" fill="url(#dg16)" stroke="#1a62c8" stroke-width=".7"/>
<ellipse cx="17.4" cy="15.4" rx="1.7" ry="2.9" fill="#0c2a60"/>
<ellipse cx="24" cy="14.8" rx="1.7" ry="2.9" fill="#0c2a60"/>
<ellipse cx="16" cy="14.8" rx=".9" ry="1.6" fill="#4fa0ee"/><ellipse cx="22.6" cy="14.2" rx=".9" ry="1.6" fill="#4fa0ee"/>
</svg>
<svg class="a" style="left:108.7px;top:477.85px" width="24.4" height="25" viewBox="0 0 32 32" preserveAspectRatio="none">
<defs><radialGradient id="dg17" cx=".5" cy=".85" r=".9"><stop offset="0" stop-color="#b4e4fc"/><stop offset=".4" stop-color="#4fa8f0"/><stop offset=".75" stop-color="#1f7ae0"/><stop offset="1" stop-color="#155cc4"/></radialGradient></defs>
<path transform="translate(-0.6,-1.2) scale(1.02,1.03)" d="M7.5 1 Q11 5.5 15.5 5.6 Q29.5 6 29.6 17.5 Q29.5 29.5 15.8 29.8 Q1.8 29.5 1.6 17.5 Q1.6 10.5 8.5 6.8 Q8.8 4 7.5 1 Z" fill="url(#dg17)" stroke="#1a62c8" stroke-width=".7"/>
<ellipse cx="17.4" cy="15.4" rx="1.7" ry="2.9" fill="#0c2a60"/>
<ellipse cx="24" cy="14.8" rx="1.7" ry="2.9" fill="#0c2a60"/>
<ellipse cx="16" cy="14.8" rx=".9" ry="1.6" fill="#4fa0ee"/><ellipse cx="22.6" cy="14.2" rx=".9" ry="1.6" fill="#4fa0ee"/>
</svg>
<svg class="a" style="left:108.7px;top:503.5px" width="24.4" height="25" viewBox="0 0 32 32" preserveAspectRatio="none">
<g transform="translate(0,-0.8)"><circle cx="15.6" cy="16.2" r="13.6" fill="#a6def6" stroke="#2f66b4" stroke-width="2.1"/>
<circle cx="15.8" cy="18" r="10" fill="#bfeafc" opacity=".6"/>
<text x="14.6" y="26.2" text-anchor="middle" font-family="'Liberation Serif','DejaVu Serif',serif" font-style="italic" font-weight="bold" font-size="27" fill="#1c3f9e" transform="skewX(-8) translate(3.4,0)">V</text><path d="M21.5 12.5 L30.4 2.8" stroke="#1c3f9e" stroke-width="1.5" stroke-linecap="round" fill="none"/></g>
</svg>
<svg class="a" style="left:108.7px;top:529.15px" width="24.4" height="25" viewBox="0 0 32 32" preserveAspectRatio="none">
<circle cx="15.8" cy="15.2" r="14.2" fill="#2a9ad8"/><path d="M14.6 3.4 L17 3.4 L17.6 6 L14 6 Z" fill="#fff"/>
</svg>
<div class="a" style="left:774.5px;top:52px;width:12.5px;height:481px;background:#ebe9e4"></div>
<div class="a" style="left:14px;top:533px;width:773px;height:12px;background:#ebe9e4"></div>
<div class="a" style="left:774.5px;top:533px;width:13.5px;height:12px;background:#d4d0c8"></div>
<div class="a" style="left:774.5px;top:52.5px;width:12.3px;height:12px;box-sizing:border-box;background:#d4d0c8;border:1px solid;border-color:#fff #6f6d68 #6f6d68 #fff;"></div>
<div class="a" style="left:774.5px;top:64.5px;width:12.3px;height:248.5px;box-sizing:border-box;background:#d4d0c8;border:1px solid;border-color:#fff #6f6d68 #6f6d68 #fff;"></div>
<div class="a" style="left:774.5px;top:520.7px;width:12.3px;height:12px;box-sizing:border-box;background:#d4d0c8;border:1px solid;border-color:#fff #6f6d68 #6f6d68 #fff;"></div>
<div class="a" style="left:14.5px;top:533px;width:12.3px;height:12px;box-sizing:border-box;background:#d4d0c8;border:1px solid;border-color:#fff #6f6d68 #6f6d68 #fff;"></div>
<div class="a" style="left:26.8px;top:533px;width:397px;height:12px;box-sizing:border-box;background:#d4d0c8;border:1px solid;border-color:#fff #6f6d68 #6f6d68 #fff;"></div>
<div class="a" style="left:762px;top:533px;width:12.3px;height:12px;box-sizing:border-box;background:#d4d0c8;border:1px solid;border-color:#fff #6f6d68 #6f6d68 #fff;"></div>
<div class="a" style="left:777.6px;top:56.5px;width:0;height:0;border-left:3px solid transparent;border-right:3px solid transparent;border-bottom:3.2px solid #000"></div>
<div class="a" style="left:777.6px;top:525.3px;width:0;height:0;border-left:3px solid transparent;border-right:3px solid transparent;border-top:3.2px solid #000"></div>
<div class="a" style="left:18.6px;top:536px;width:0;height:0;border-top:3px solid transparent;border-bottom:3px solid transparent;border-right:3.2px solid #000"></div>
<div class="a" style="left:766.8px;top:536px;width:0;height:0;border-top:3px solid transparent;border-bottom:3px solid transparent;border-left:3.2px solid #000"></div>
<div class="a" style="left:14px;top:545px;width:774px;height:42px;background:#c0c0c0"></div>
<div class="cb" style="left:225.5px;top:562.6px;width:10.8px;height:11px"></div>
<div class="a cj" style="left:239.5px;top:561px;height:14px;line-height:14px;font-size:9.3px">考察隐藏窗口</div>
<div class="cb" style="left:318px;top:562.6px;width:10.4px;height:11px"></div>
<svg class="a" style="left:318px;top:562.6px" width="11" height="11" viewBox="0 0 11 11"><path d="M2.6 5.2 L4.5 7.4 L8.2 3" fill="none" stroke="#000" stroke-width="1.5"/></svg>
<div class="a cj" style="left:332px;top:561px;height:14px;line-height:14px;font-size:9.3px">列表显示图标</div>
<div class="a" style="left:410.5px;top:557.5px;width:164.5px;height:19.3px;box-sizing:border-box;background:#ece9e2;border:1px solid;border-color:#fff #55544f #55544f #fff;box-shadow:inset -1px -1px 0 #9a9892"></div>
<div class="a cj" style="left:417px;top:561px;height:14px;line-height:14px;font-size:9.4px">读顶级窗口句柄<span style="display:inline-block;width:18px;text-align:center">|</span>初始化窗口列表</div>
<div class="a" style="left:213px;top:104px;width:118px;height:204.5px;box-sizing:border-box;background:#d4d0c8;border:1px solid;border-color:#d4d0c8 #55544f #55544f #d4d0c8;box-shadow:inset 1px 1px 0 #fff, inset -1px -1px 0 #8a8780">
<div class="a" style="left:2.2px;top:.6px;width:112.8px;height:14.6px;background:#0a246a"></div>
<div class="mi" style="top:1.2px;color:#fff;">修改窗口标题</div>
<div class="sep" style="top:17.3px"></div>
<div class="mi" style="top:22.03px;">设置或取消置顶</div>
<div class="arr" style="left:106.6px;top:25.43px"></div>
<div class="sep" style="top:38.15px"></div>
<div class="mi" style="top:42.86px;">设置窗口透明度</div>
<div class="arr" style="left:106.6px;top:46.26px"></div>
<div class="sep" style="top:59px"></div>
<div class="mi" style="top:63.69px;">调节窗口大小</div>
<div class="sep" style="top:79.85px"></div>
<div class="mi" style="top:84.52px;">隐藏或显示该窗口</div>
<div class="arr" style="left:106.6px;top:87.92px"></div>
<div class="sep" style="top:100.7px"></div>
<div class="mi" style="top:105.35px;">取该窗口子窗口信息</div>
<div class="sep" style="top:121.55px"></div>
<div class="mi" style="top:126.18px;">关闭该窗口</div>
<div class="sep" style="top:142.4px"></div>
<div class="mi" style="top:147.01px;">复制窗口信息</div>
<div class="sep" style="top:163.25px"></div>
<div class="mi" style="top:167.84px;">闪烁该窗口</div>
<div class="sep" style="top:184.1px"></div>
<div class="mi" style="top:188.67px;">打开文件位置</div>
</div>
</body></html>
